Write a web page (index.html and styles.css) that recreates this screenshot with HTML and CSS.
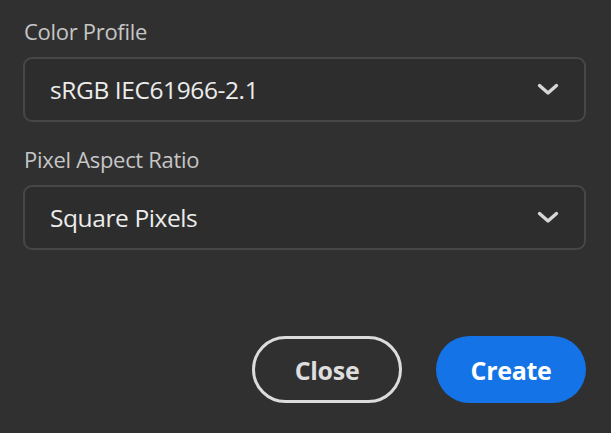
FILE: index.html
```html
<!DOCTYPE html>
<html>
<head>
<meta charset="utf-8">
<link rel="stylesheet" href="styles.css">
</head>
<body>
<div class="dialog">
  <div class="field">
    <div class="label">Color Profile</div>
    <div class="select">
      <span class="value">sRGB IEC61966-2.1</span>
      <svg class="chev" width="24" height="15" viewBox="0 0 24 15"><path d="M3.5 3.5 L12 11 L20.5 3.5" fill="none" stroke="#d6d6d6" stroke-width="3.4" stroke-linecap="round" stroke-linejoin="round"/></svg>
    </div>
  </div>
  <div class="field">
    <div class="label">Pixel Aspect Ratio</div>
    <div class="select">
      <span class="value">Square Pixels</span>
      <svg class="chev" width="24" height="15" viewBox="0 0 24 15"><path d="M3.5 3.5 L12 11 L20.5 3.5" fill="none" stroke="#d6d6d6" stroke-width="3.4" stroke-linecap="round" stroke-linejoin="round"/></svg>
    </div>
  </div>
  <div class="actions">
    <button class="btn btn-close">Close</button>
    <button class="btn btn-create">Create</button>
  </div>
</div>
</body>
</html>
```
FILE: styles.css
```css
html, body {
  margin: 0;
  padding: 0;
  background: #303030;
  width: 611px;
  height: 433px;
  overflow: hidden;
}
.dialog {
  font-family: "Open Sans", Lato, sans-serif;
  padding: 16px 25px 0 23px;
  display: flex;
  flex-direction: column;
}
.field {
  display: flex;
  flex-direction: column;
}
.field + .field {
  margin-top: 22px;
}
.label {
  color: #c6c6c6;
  font-size: 22px;
  line-height: 30px;
  letter-spacing: -0.3px;
  padding-left: 1px;
  margin-bottom: 11px;
}
.select {
  box-sizing: border-box;
  height: 65px;
  border: 2px solid #474747;
  border-radius: 9px;
  background: #2d2d2d;
  display: flex;
  align-items: center;
  justify-content: space-between;
  padding: 0 24px 0 25px;
}
.value {
  color: #ececec;
  font-size: 24.5px;
  font-weight: 500;
  letter-spacing: -0.4px;
}
.chev {
  display: block;
}
.actions {
  margin-top: 86px;
  display: flex;
  justify-content: flex-end;
  gap: 34px;
}
.btn {
  box-sizing: border-box;
  width: 150px;
  height: 67px;
  border-radius: 34px;
  font-family: "Open Sans", Lato, sans-serif;
  font-weight: 700;
  font-size: 25px;
  letter-spacing: -0.3px;
  cursor: pointer;
}
.btn-close {
  background: transparent;
  border: 3px solid #dcdcdc;
  color: #dedede;
}
.btn-create {
  background: #1473e6;
  border: none;
  color: #ffffff;
}
```
